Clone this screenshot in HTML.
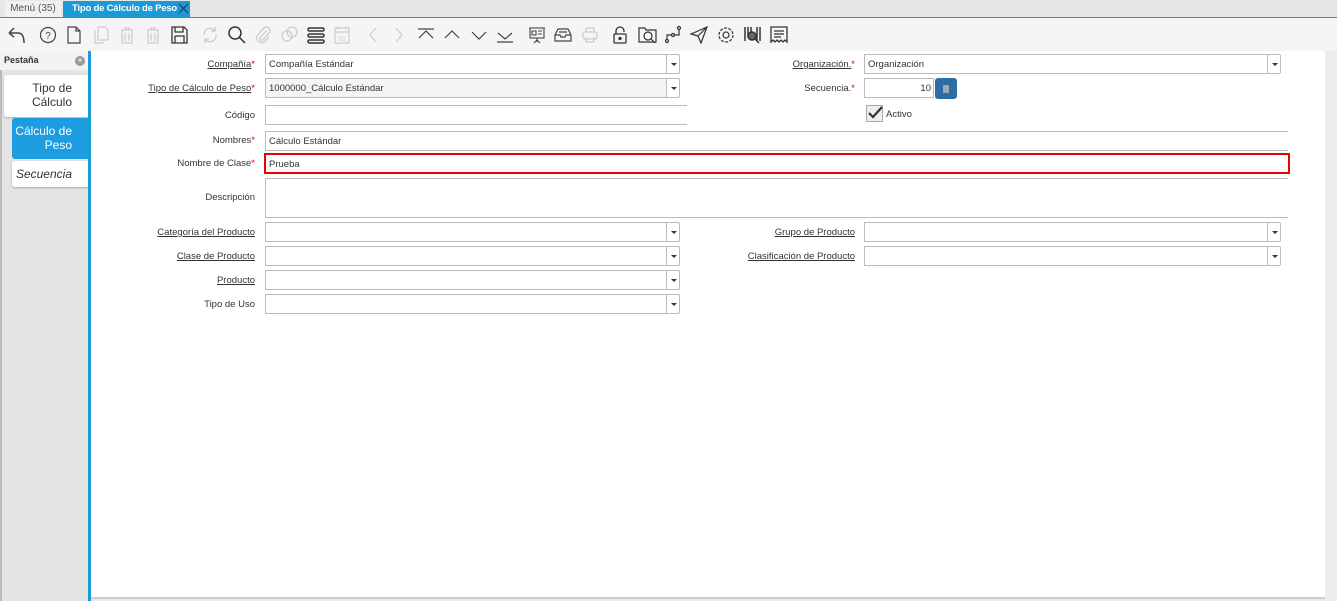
<!DOCTYPE html>
<html><head><meta charset="utf-8">
<style>
*{box-sizing:border-box;margin:0;padding:0}
body{width:1337px;height:601px;overflow:hidden;background:#ececec;font-family:"Liberation Sans",sans-serif;font-size:10px;color:#333;position:relative}
.a{position:absolute}
.tabbar{left:0;top:0;width:1337px;height:17px;background:#e6e6e6}
.t1{left:5px;top:1px;width:56px;height:16px;background:#f1f1f1;color:#555;font-size:10px;line-height:16px;text-align:center}
.t2{left:63px;top:1px;width:127px;height:16px;background:#1a9ad6;color:#fff;font-weight:bold;font-size:9.5px;letter-spacing:-0.2px;line-height:16px;padding-left:9px}
.tool{left:0;top:17px;width:1337px;height:34px;background:#f5f5f5;border-top:1px solid #1a9ad6}
.tool svg{position:absolute;top:7px}
.left{left:0;top:51px;width:88px;height:550px;background:#e4e4e4;border-left:2px solid #bbb}
.lh{left:0;top:51px;width:88px;height:19px;background:#f2f2f2;font-weight:bold;font-size:9px;line-height:19px;padding-left:4px;color:#333}
.vb{left:88px;top:51px;width:3px;height:550px;background:#1a9ad6}
.main{left:91px;top:51px;width:1234px;height:548px;background:#fff;border-bottom:2px solid #ccc}
.lb{position:absolute;text-align:right;font-size:9.5px;color:#333;width:240px}
.lb u{text-decoration:underline}
.st{color:#d00}
.in{position:absolute;border:1px solid #bbb;background:#fff;height:20px;font-size:9.5px;line-height:18px;padding:1px 0 0 3px;color:#333}
.btn{position:absolute;width:14px;height:20px;border:1px solid #bbb;background:#fff;border-radius:0 2px 2px 0}
.btn:after{content:"";position:absolute;left:4px;top:8px;border-left:3px solid transparent;border-right:3px solid transparent;border-top:3px solid #333}
</style></head><body>
<div class="a tabbar"></div>
<div class="a t1">Menú (35)</div>
<div class="a t2">Tipo de Cálculo de Peso</div>
<svg class="a" style="left:178px;top:3px" width="11" height="11" viewBox="0 0 11 11"><path d="M1 1L10 10M10 1L1 10" stroke="#333" stroke-width="1.2"/></svg>
<div class="a tool">
<svg style="left:6px" width="22" height="20" viewBox="0 0 22 20" fill="none" stroke="#444" stroke-width="1.5"><path d="M3 8 L8 3 M3 8 L8 12 M3 8 H12 Q18 8 18 18"/></svg>
<svg style="left:38px" width="20" height="20" viewBox="0 0 20 20" fill="none" stroke="#444" stroke-width="1.2"><circle cx="10" cy="10" r="7.5"/><text x="10" y="14" font-size="10" text-anchor="middle" fill="#444" stroke="none">?</text></svg>
<svg style="left:65px" width="18" height="20" viewBox="0 0 18 20" fill="none" stroke="#444" stroke-width="1.2"><path d="M3 2H11L15 6V18H3Z M11 2V6H15"/></svg>
<svg style="left:92px" width="18" height="20" viewBox="0 0 18 20" fill="none" stroke="#ccc" stroke-width="1.2"><path d="M6 2H13L16 5V15H6Z M3 5V18H12"/></svg>
<svg style="left:118px" width="18" height="20" viewBox="0 0 18 20" fill="none" stroke="#ccc" stroke-width="1.2"><path d="M3 5H15 M7 5V3H11V5 M4 5V18H14V5 M7 8V16 M11 8V16"/></svg>
<svg style="left:144px" width="18" height="20" viewBox="0 0 18 20" fill="none" stroke="#ccc" stroke-width="1.2"><path d="M3 5H15 M7 5V3H11V5 M4 5V18H14V5 M7 8V16 M11 8V16"/></svg>
<svg style="left:170px" width="18" height="20" viewBox="0 0 18 20" fill="none" stroke="#333" stroke-width="1.3"><path d="M2 2H14L17 5V18H2Z M5 2V7H13V2 M5 11H14V18 M5 18V11"/></svg>
<svg style="left:200px" width="20" height="20" viewBox="0 0 20 20" fill="none" stroke="#ccc" stroke-width="1.3"><path d="M4 10A6 6 0 0 1 15 6 M16 10A6 6 0 0 1 5 14 M15 2V6H11 M5 18V14H9"/></svg>
<svg style="left:227px" width="20" height="20" viewBox="0 0 20 20" fill="none" stroke="#333" stroke-width="1.5"><circle cx="8" cy="8" r="6"/><path d="M12.5 12.5L18 18"/></svg>
<svg style="left:253px" width="20" height="20" viewBox="0 0 20 20" fill="none" stroke="#ccc" stroke-width="1.3"><path d="M14 5L7 13A2 2 0 0 0 10 15L16 8A3.5 3.5 0 0 0 11 3L4 11A5 5 0 0 0 11 17L16 12"/></svg>
<svg style="left:279px" width="20" height="20" viewBox="0 0 20 20" fill="none" stroke="#ccc" stroke-width="1.3"><circle cx="8" cy="11" r="5"/><circle cx="13" cy="7" r="5"/></svg>
<svg style="left:306px" width="20" height="20" viewBox="0 0 20 20" fill="none" stroke="#333" stroke-width="1.5"><rect x="2" y="3" width="16" height="3" rx="1.5"/><rect x="2" y="9" width="16" height="3" rx="1.5"/><rect x="2" y="15" width="16" height="3" rx="1.5"/></svg>
<svg style="left:333px" width="18" height="20" viewBox="0 0 18 20" fill="none" stroke="#ccc" stroke-width="1.2"><rect x="2" y="3" width="14" height="15"/><path d="M2 7H16 M5 1V4 M13 1V4"/><text x="9" y="16" font-size="7" text-anchor="middle" fill="#ccc" stroke="none">31</text></svg>
<svg style="left:366px" width="14" height="20" viewBox="0 0 14 20" fill="none" stroke="#ccc" stroke-width="1.2"><path d="M10 3L4 10L10 17"/></svg>
<svg style="left:392px" width="14" height="20" viewBox="0 0 14 20" fill="none" stroke="#ccc" stroke-width="1.2"><path d="M4 3L10 10L4 17"/></svg>
<svg style="left:416px" width="20" height="20" viewBox="0 0 20 20" fill="none" stroke="#444" stroke-width="1.2"><path d="M2 4H18 M3 13L10 6L17 13"/></svg>
<svg style="left:442px" width="20" height="20" viewBox="0 0 20 20" fill="none" stroke="#444" stroke-width="1.2"><path d="M3 13L10 6L17 13"/></svg>
<svg style="left:469px" width="20" height="20" viewBox="0 0 20 20" fill="none" stroke="#444" stroke-width="1.2"><path d="M3 7L10 14L17 7"/></svg>
<svg style="left:495px" width="20" height="20" viewBox="0 0 20 20" fill="none" stroke="#444" stroke-width="1.2"><path d="M2 17H18 M3 8L10 14L17 8"/></svg>
<svg style="left:527px" width="20" height="20" viewBox="0 0 20 20" fill="none" stroke="#444" stroke-width="1.1"><rect x="3" y="3" width="14" height="10"/><path d="M2 3H18 M10 13V17 M7 18L10 15L13 18 M5 6H9V10H5Z M11 6H15 M11 9H15"/></svg>
<svg style="left:553px" width="20" height="20" viewBox="0 0 20 20" fill="none" stroke="#444" stroke-width="1.2"><path d="M2 10L5 4H15L18 10V16H2Z M2 10H7L8 12H12L13 10H18 M6 7H14"/></svg>
<svg style="left:580px" width="20" height="20" viewBox="0 0 20 20" fill="none" stroke="#ccc" stroke-width="1.2"><rect x="3" y="7" width="14" height="7" rx="2"/><path d="M6 7V3H14V7 M6 12V17H14V12"/></svg>
<svg style="left:610px" width="20" height="20" viewBox="0 0 20 20" fill="none" stroke="#333" stroke-width="1.3"><rect x="4" y="9" width="12" height="9" rx="1"/><path d="M6 9V6A4 4 0 0 1 14 6V7"/><circle cx="10" cy="13.5" r="1" fill="#333"/></svg>
<svg style="left:637px" width="22" height="20" viewBox="0 0 22 20" fill="none" stroke="#333" stroke-width="1.2"><path d="M2 3H8L9 5H19V17H2Z"/><circle cx="11" cy="11" r="4"/><path d="M14 14L18 18"/></svg>
<svg style="left:663px" width="20" height="20" viewBox="0 0 20 20" fill="none" stroke="#333" stroke-width="1.2"><circle cx="4" cy="16" r="1.5"/><circle cx="10" cy="10" r="1.5"/><circle cx="16" cy="3" r="1.5"/><path d="M4 14.5V10H8.5 M11.5 10H16V4.5"/></svg>
<svg style="left:689px" width="20" height="20" viewBox="0 0 20 20" fill="none" stroke="#333" stroke-width="1.2"><path d="M2 9L18 2L12 18L9 11Z M9 11L18 2"/></svg>
<svg style="left:716px" width="20" height="20" viewBox="0 0 20 20" fill="none" stroke="#333" stroke-width="1.2"><circle cx="10" cy="10" r="3"/><circle cx="10" cy="10" r="7" stroke-dasharray="3 1.4"/></svg>
<svg style="left:742px" width="20" height="20" viewBox="0 0 20 20" fill="none" stroke="#333" stroke-width="1.5"><path d="M3 2V16 M6 2V12 M9 2V8 M15 2V16 M18 2V16"/><circle cx="10" cy="11" r="4" fill="#666"/><path d="M13 14L17 18"/></svg>
<svg style="left:769px" width="20" height="20" viewBox="0 0 20 20" fill="none" stroke="#333" stroke-width="1.3"><path d="M2 2H18V17L16 15L14 17L12 15L10 17L8 15L6 17L4 15L2 17Z M5 6H15 M5 9H15 M5 12H12"/></svg>
</div>
<div class="a left"></div>
<div class="a lh">Pestaña<span style="position:absolute;right:3px;top:5px;width:10px;height:10px;border-radius:50%;background:#999;color:#fff;font-size:7px;line-height:10px;text-align:center">«</span></div>
<div class="a" style="left:4px;top:75px;width:84px;height:42px;background:#fff;border-radius:3px 0 0 3px;box-shadow:0 1px 2px #aaa;font-size:12px;text-align:right;padding:6px 16px 0 0;line-height:14px;color:#333">Tipo de<br>Cálculo</div>
<div class="a" style="left:12px;top:118px;width:76px;height:41px;background:#1d9ce0;border-radius:3px 0 0 3px;font-size:12px;text-align:right;padding:6px 16px 0 0;line-height:14px;color:#fff">Cálculo de<br>Peso</div>
<div class="a" style="left:12px;top:161px;width:76px;height:26px;background:#fff;border-radius:3px 0 0 3px;box-shadow:0 1px 2px #aaa;font-size:12px;font-style:italic;text-align:right;padding:6px 16px 0 0;line-height:14px;color:#333">Secuencia</div>
<div class="a vb"></div>
<div class="a main"></div>

<div class="lb" style="left:15px;top:59px"><u>Compañía</u><span class="st">*</span></div>
<div class="in" style="left:265px;top:54px;width:402px">Compañía Estándar</div><div class="btn" style="left:666px;top:54px"></div>
<div class="lb" style="left:15px;top:83px"><u>Tipo de Cálculo de Peso</u><span class="st">*</span></div>
<div class="in" style="left:265px;top:78px;width:402px;background:#f5f5f5">1000000_Cálculo Estándar</div><div class="btn" style="left:666px;top:78px"></div>
<div class="lb" style="left:15px;top:110px">Código</div>
<div class="in" style="left:265px;top:105px;width:422px;border-left:1px solid #bbb;border-right:none"></div>
<div class="lb" style="left:15px;top:135px">Nombres<span class="st">*</span></div>
<div class="in" style="left:265px;top:131px;width:1023px;border-right:none">Cálculo Estándar</div>
<div class="lb" style="left:15px;top:158px">Nombre de Clase<span class="st">*</span></div>
<div class="in" style="left:264px;top:153px;width:1026px;height:21px;border:2px solid #e00;padding:1px 0 0 3px;line-height:17px">Prueba</div>
<div class="lb" style="left:15px;top:192px">Descripción</div>
<div class="in" style="left:265px;top:178px;width:1023px;height:40px;border-right:none"></div>
<div class="lb" style="left:15px;top:227px"><u>Categoría del Producto</u></div>
<div class="in" style="left:265px;top:222px;width:402px"></div><div class="btn" style="left:666px;top:222px"></div>
<div class="lb" style="left:15px;top:251px"><u>Clase de Producto</u></div>
<div class="in" style="left:265px;top:246px;width:402px"></div><div class="btn" style="left:666px;top:246px"></div>
<div class="lb" style="left:15px;top:275px"><u>Producto</u></div>
<div class="in" style="left:265px;top:270px;width:402px"></div><div class="btn" style="left:666px;top:270px"></div>
<div class="lb" style="left:15px;top:299px">Tipo de Uso</div>
<div class="in" style="left:265px;top:294px;width:402px"></div><div class="btn" style="left:666px;top:294px"></div>

<div class="lb" style="left:615px;top:59px"><u>Organización.</u><span class="st">*</span></div>
<div class="in" style="left:864px;top:54px;width:404px">Organización</div><div class="btn" style="left:1267px;top:54px"></div>
<div class="lb" style="left:615px;top:83px">Secuencia.<span class="st">*</span></div>
<div class="in" style="left:864px;top:78px;width:70px;text-align:right;padding-right:2px">10</div>
<div class="a" style="left:935px;top:78px;width:22px;height:21px;background:#2e6da4;border-radius:3px"><div class="a" style="left:8px;top:7px;width:6px;height:8px;background:#9ab;border-radius:1px"></div></div>
<div class="a" style="left:866px;top:105px;width:17px;height:17px;border:1px solid #aaa;background:#eee"></div>
<svg class="a" style="left:867px;top:105px" width="16" height="16" viewBox="0 0 16 16"><path d="M2 8L6 12L15 2" fill="none" stroke="#333" stroke-width="2.2"/></svg>
<div class="a" style="left:886px;top:109px;font-size:9.5px">Activo</div>
<div class="lb" style="left:615px;top:227px"><u>Grupo de Producto</u></div>
<div class="in" style="left:864px;top:222px;width:404px"></div><div class="btn" style="left:1267px;top:222px"></div>
<div class="lb" style="left:615px;top:251px"><u>Clasificación de Producto</u></div>
<div class="in" style="left:864px;top:246px;width:404px"></div><div class="btn" style="left:1267px;top:246px"></div>
</body></html>
